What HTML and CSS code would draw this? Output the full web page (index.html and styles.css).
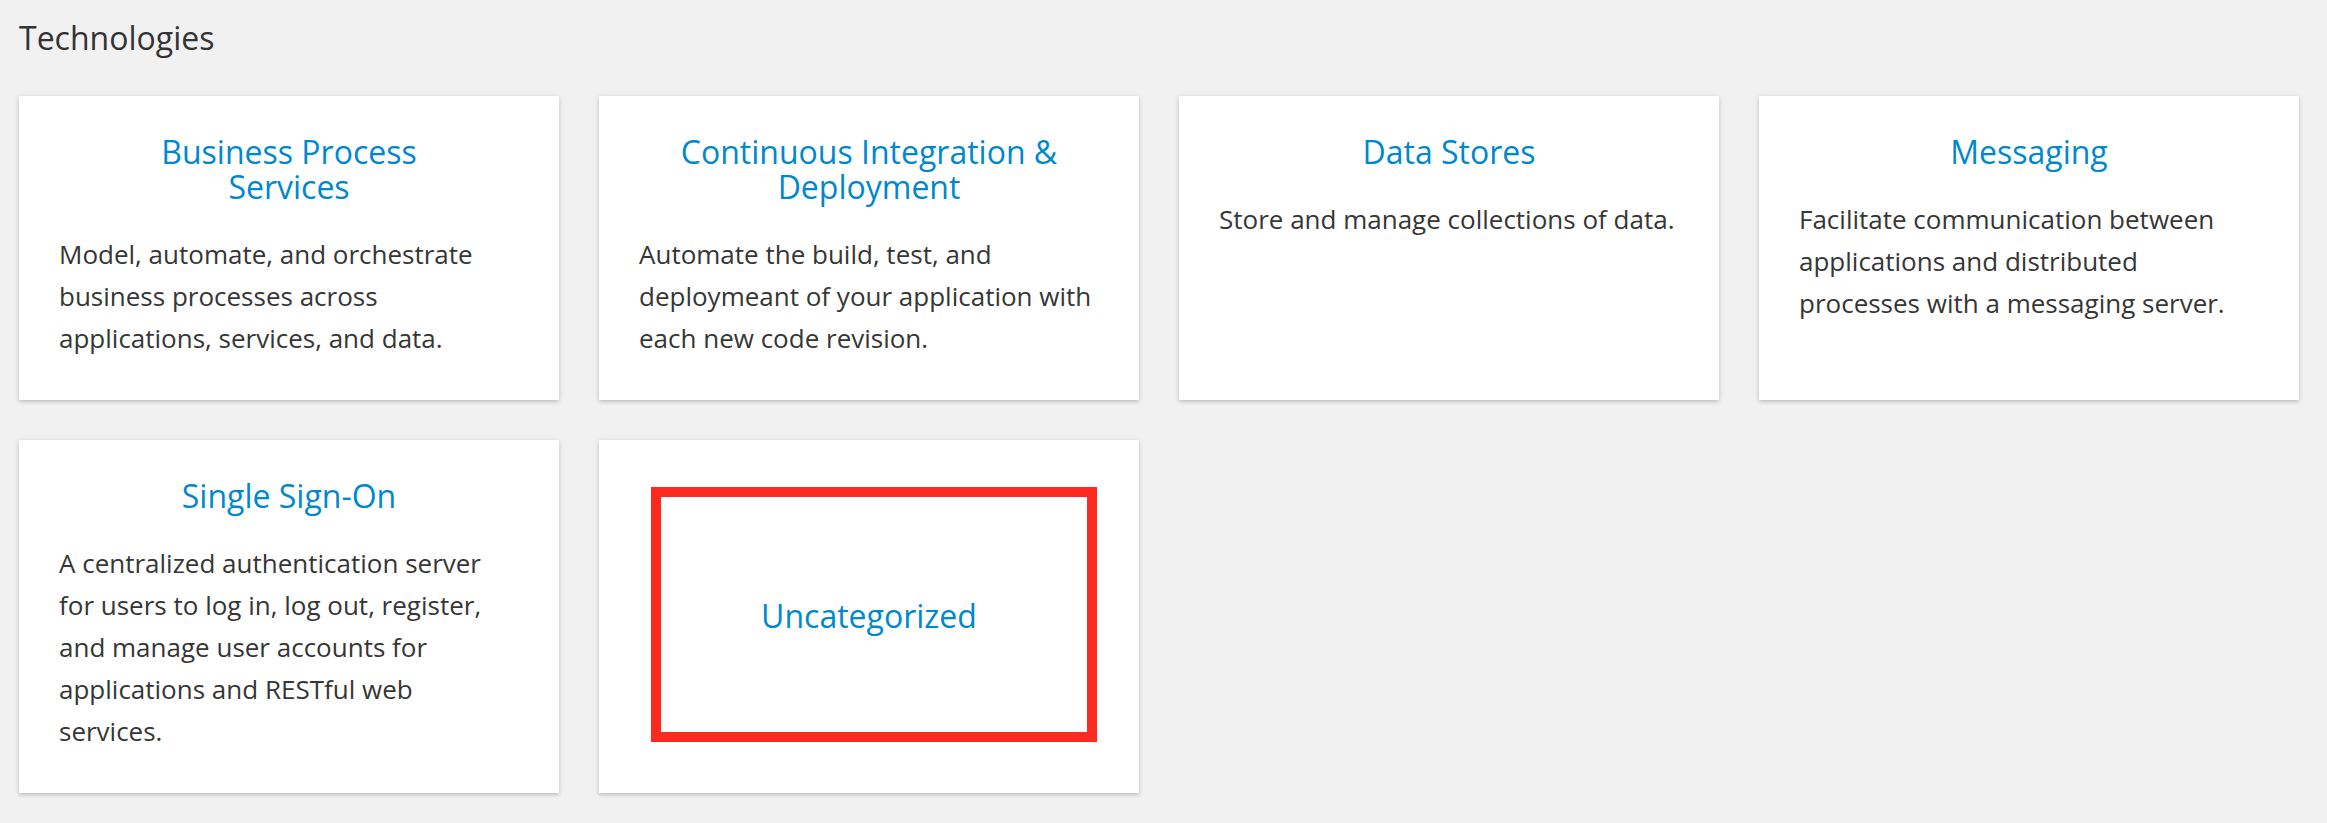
FILE: index.html
```html
<!DOCTYPE html>
<html lang="en">
<head>
<meta charset="utf-8">
<title>Technologies</title>
<link rel="stylesheet" href="styles.css">
</head>
<body>
<main class="catalog">
  <h2 class="section-title">Technologies</h2>
  <div class="card-grid">
    <div class="card">
      <h3 class="card-title">Business Process Services</h3>
      <p class="card-desc">Model, automate, and orchestrate business processes across applications, services, and data.</p>
    </div>
    <div class="card">
      <h3 class="card-title">Continuous Integration &amp; Deployment</h3>
      <p class="card-desc">Automate the build, test, and deploymeant of your application with each new code revision.</p>
    </div>
    <div class="card">
      <h3 class="card-title">Data Stores</h3>
      <p class="card-desc">Store and manage collections of data.</p>
    </div>
    <div class="card">
      <h3 class="card-title">Messaging</h3>
      <p class="card-desc">Facilitate communication between applications and distributed processes with a messaging server.</p>
    </div>
    <div class="card">
      <h3 class="card-title">Single Sign-On</h3>
      <p class="card-desc">A centralized authentication server for users to log in, log out, register, and manage user accounts for applications and RESTful web services.</p>
    </div>
    <div class="card card-centered">
      <h3 class="card-title">Uncategorized</h3>
      <div class="highlight-box"></div>
    </div>
  </div>
</main>
</body>
</html>
```
FILE: styles.css
```css
html, body {
  margin: 0;
  padding: 0;
}

body {
  background: #f1f1f1;
  font-family: "Open Sans", "Liberation Sans", sans-serif;
  color: #363636;
  width: 2327px;
  height: 823px;
  overflow: hidden;
}

.catalog {
  padding: 20px 19px 0;
}

.section-title {
  margin: 0 0 41px;
  font-size: 32px;
  line-height: 35px;
  font-weight: 400;
  color: #333333;
}

.card-grid {
  display: grid;
  grid-template-columns: repeat(4, 540px);
  column-gap: 40px;
  row-gap: 40px;
}

.card {
  position: relative;
  background: #ffffff;
  padding: 38px 40px 41px;
  box-shadow: 0 2px 4px rgba(0, 0, 0, 0.18), 0 0 6px rgba(0, 0, 0, 0.06);
}

.card-title {
  margin: 0 0 29px;
  padding: 0 40px;
  font-size: 32px;
  line-height: 35px;
  font-weight: 400;
  color: #0088ce;
  text-align: center;
}

.card-desc {
  margin: 0;
  font-size: 26px;
  line-height: 42px;
  color: #363636;
}

.card-centered {
  display: flex;
  align-items: center;
  justify-content: center;
}

.card-centered .card-title {
  margin: 0;
}

.highlight-box {
  position: absolute;
  left: 52px;
  top: 47px;
  width: 426px;
  height: 235px;
  border: 10px solid #fd2a20;
}
```
